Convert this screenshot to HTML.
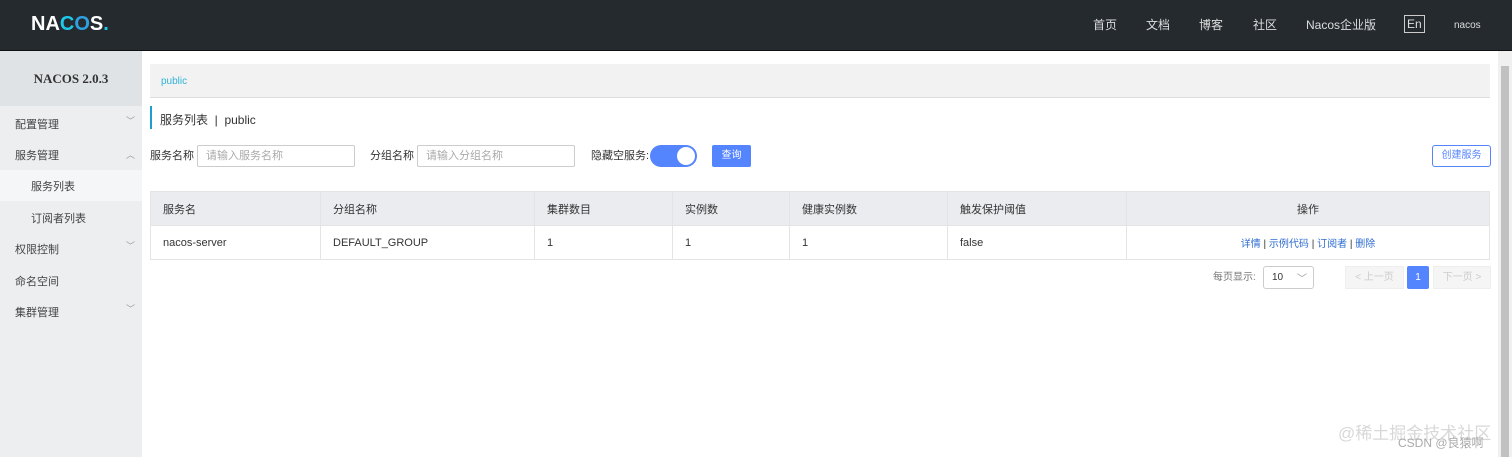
<!DOCTYPE html>
<html><head><meta charset="utf-8"><style>
*{box-sizing:border-box;margin:0;padding:0}
body{width:1512px;height:457px;overflow:hidden;background:#fff;font-family:"Liberation Sans","Noto Sans CJK SC",sans-serif;font-size:12px;color:#333;position:relative}
.hd{position:absolute;left:0;top:0;width:1512px;height:51px;background:#252a2f;border-bottom:1px solid #111}
.logo{position:absolute;left:31px;top:13px;color:#fff;font-size:20px;font-weight:bold;letter-spacing:0px}
.nav span{position:absolute;top:17px;color:#ddd;font-size:12px;line-height:16px}
.side{position:absolute;left:0;top:51px;width:142px;height:406px;background:#eceef0}
.ver{height:55px;background:#e0e3e6;text-align:center;line-height:55px;font-weight:bold;font-size:13px;color:#333;font-family:"Liberation Serif","Noto Serif CJK SC",serif}
.mi{position:absolute;left:15px;font-size:11px;color:#444;line-height:14px}
.ar{position:absolute;left:126px;font-size:9px;color:#999}
.t{position:absolute;line-height:14px}
.in{position:absolute;height:22px;border:1px solid #ccc;border-radius:2px;color:#aaa;font-size:11px;padding-left:8px;line-height:20px}
table{position:absolute;left:150px;top:191px;width:1340px;border-collapse:collapse;font-size:11px}
td{border:1px solid #e4e4e4;padding-left:12px;height:34px}
tr.h td{background:#ebecf0;color:#333}
a{color:#2f6cd0;text-decoration:none}
</style></head><body>
<div class="hd">
<div class="logo">NA<span style="color:#1ec8e8">C</span><span style="color:#2fa0e0">O</span>S<span style="color:#1ec8e8">.</span></div>
<div class="nav"><span style="left:1093px">首页</span><span style="left:1146px">文档</span><span style="left:1199px">博客</span><span style="left:1253px">社区</span><span style="left:1306px">Nacos企业版</span>
<span style="left:1404px;top:15px;border:1px solid #ccc;padding:0 2px;line-height:16px">En</span><span style="left:1454px;font-size:10px;top:18px">nacos</span></div>
</div>
<div class="side"><div class="ver">NACOS 2.0.3</div>
<div style="position:absolute;left:0;top:119px;width:142px;height:31px;background:#f5f6f7"></div>
<span class="mi" style="top:67px">配置管理</span><span class="ar" style="top:63px">﹀</span>
<span class="mi" style="top:98px">服务管理</span><span class="ar" style="top:97px">︿</span>
<span class="mi" style="top:129px;left:31px">服务列表</span>
<span class="mi" style="top:161px;left:31px">订阅者列表</span>
<span class="mi" style="top:192px">权限控制</span><span class="ar" style="top:188px">﹀</span>
<span class="mi" style="top:224px">命名空间</span>
<span class="mi" style="top:255px">集群管理</span><span class="ar" style="top:251px">﹀</span>
</div>
<div style="position:absolute;left:1498px;top:51px;width:14px;height:406px;background:#f0f0f0"><div style="position:absolute;left:3px;top:15px;width:8px;height:391px;background:#c1c1c1"></div></div>
<div style="position:absolute;left:150px;top:64px;width:1340px;height:34px;background:#f2f2f2;border-bottom:1px solid #ddd"><span style="position:absolute;left:11px;top:12px;color:#2fb3d6;font-size:10px">public</span></div>
<div style="position:absolute;left:150px;top:106px;width:2px;height:23px;background:#1a9fd0"></div>
<span class="t" style="left:160px;top:113px;font-size:12px">服务列表 &nbsp;| &nbsp;public</span>
<span class="t" style="left:150px;top:149px;font-size:11px">服务名称</span>
<div class="in" style="left:197px;top:145px;width:158px">请输入服务名称</div>
<span class="t" style="left:370px;top:149px;font-size:11px">分组名称</span>
<div class="in" style="left:417px;top:145px;width:158px">请输入分组名称</div>
<span class="t" style="left:591px;top:149px;font-size:11px">隐藏空服务:</span>
<div style="position:absolute;left:650px;top:145px;width:47px;height:22px;border-radius:11px;background:#5584ff"><div style="position:absolute;right:2px;top:2px;width:18px;height:18px;border-radius:50%;background:#fff"></div></div>
<div style="position:absolute;left:712px;top:145px;width:39px;height:22px;background:#5584ff;border-radius:2px;color:#fff;font-size:10px;text-align:center;line-height:22px">查询</div>
<div style="position:absolute;left:1432px;top:145px;width:59px;height:22px;border:1px solid #5584ff;border-radius:3px;color:#5584ff;font-size:10px;text-align:center;line-height:20px">创建服务</div>
<table>
<tr class="h"><td style="width:170px">服务名</td><td style="width:214px">分组名称</td><td style="width:138px">集群数目</td><td style="width:117px">实例数</td><td style="width:158px">健康实例数</td><td style="width:179px">触发保护阈值</td><td style="text-align:center;padding:0">操作</td></tr>
<tr><td>nacos-server</td><td>DEFAULT_GROUP</td><td>1</td><td>1</td><td>1</td><td>false</td><td style="text-align:center;padding:0;font-size:10px"><a>详情</a> | <a>示例代码</a> | <a>订阅者</a> | <a>删除</a></td></tr>
</table>
<span class="t" style="left:1213px;top:271px;font-size:10px;color:#777">每页显示:</span>
<div style="position:absolute;left:1263px;top:266px;width:51px;height:23px;border:1px solid #ccc;border-radius:3px;font-size:10px;padding:5px 0 0 8px">10 <span style="position:absolute;left:33px;top:3px;color:#999">﹀</span></div>
<div style="position:absolute;left:1345px;top:266px;width:59px;height:23px;background:#f5f5f5;border:1px solid #eee;color:#ccc;font-size:10px;text-align:center;line-height:21px">&lt; 上一页</div>
<div style="position:absolute;left:1407px;top:266px;width:22px;height:23px;background:#5584ff;border-radius:2px;color:#fff;font-size:10px;text-align:center;line-height:23px">1</div>
<div style="position:absolute;left:1433px;top:266px;width:58px;height:23px;background:#f5f5f5;border:1px solid #eee;color:#ccc;font-size:10px;text-align:center;line-height:21px">下一页 &gt;</div>
<span class="t" style="left:1338px;top:424px;font-size:17px;line-height:20px;color:#d8d8d8">@稀土掘金技术社区</span>
<span class="t" style="left:1398px;top:436px;font-size:12px;color:#aaa">CSDN @良猿啊</span>
</body></html>
